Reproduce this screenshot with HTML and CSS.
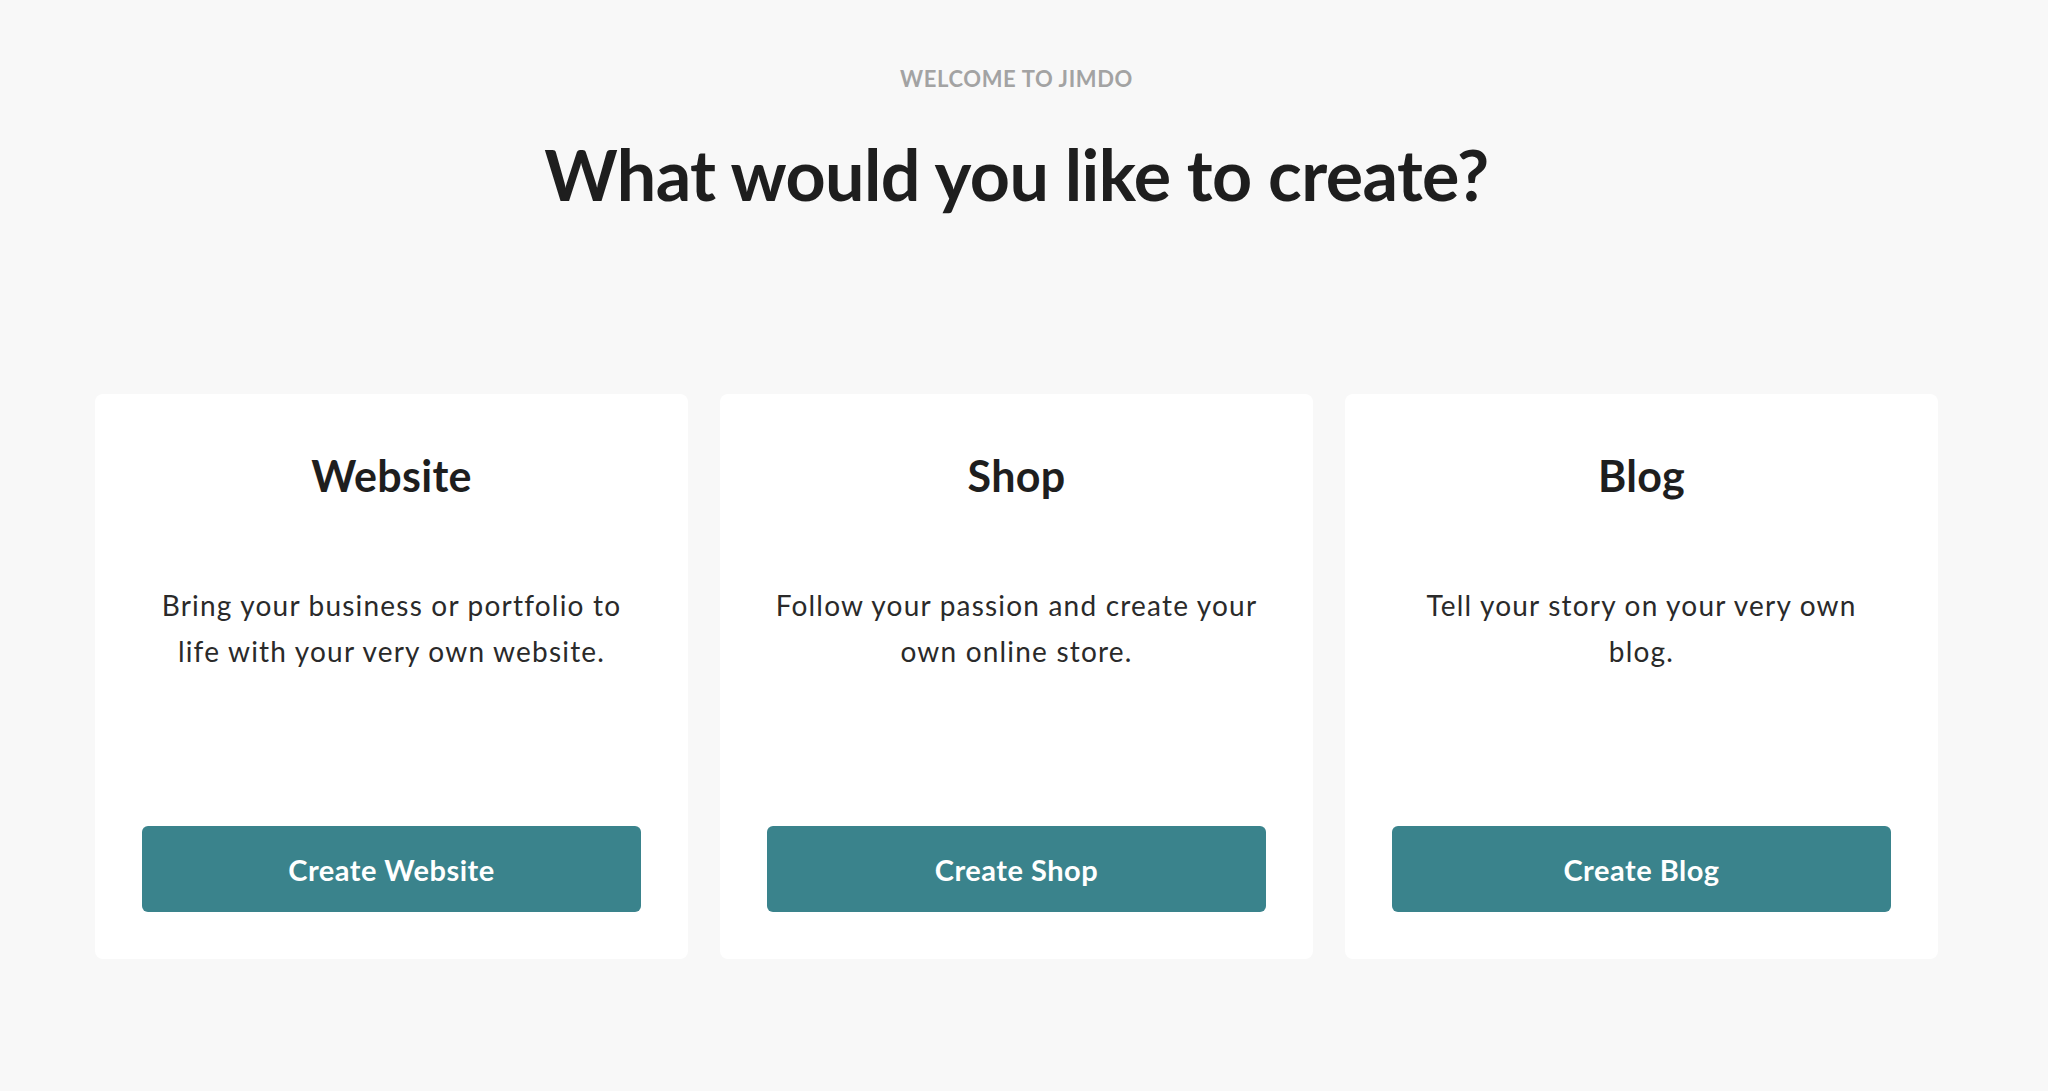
FILE: index.html
```html
<!DOCTYPE html>
<html lang="en">
<head>
<meta charset="utf-8">
<title>Welcome to Jimdo</title>
<link rel="stylesheet" href="styles.css">
</head>
<body>
<main class="page">
  <header class="intro">
    <p class="eyebrow">WELCOME TO JIMDO</p>
    <h1 class="headline">What would you like to create?</h1>
  </header>
  <section class="cards">
    <article class="card">
      <h2 class="card-title">Website</h2>
      <p class="card-text">Bring your business or portfolio to life with your very own website.</p>
      <button class="card-btn" type="button">Create Website</button>
    </article>
    <article class="card">
      <h2 class="card-title">Shop</h2>
      <p class="card-text">Follow your passion and create your own online store.</p>
      <button class="card-btn" type="button">Create Shop</button>
    </article>
    <article class="card">
      <h2 class="card-title">Blog</h2>
      <p class="card-text">Tell your story on your very own blog.</p>
      <button class="card-btn" type="button">Create Blog</button>
    </article>
  </section>
</main>
</body>
</html>
```

FILE: styles.css
```css
* { box-sizing: border-box; }
html, body {
  margin: 0;
  padding: 0;
  background: #f8f8f8;
}
body {
  font-family: "Lato", "Liberation Sans", sans-serif;
  color: #1f1f1f;
  min-height: 1091px;
}
.page {
  width: 2033px;
  display: flex;
  flex-direction: column;
  align-items: center;
}
.intro {
  display: flex;
  flex-direction: column;
  align-items: center;
  padding-top: 66px;
}
.eyebrow {
  margin: 0;
  font-size: 22px;
  line-height: 26px;
  font-weight: 700;
  letter-spacing: 0.6px;
  color: #a3a3a3;
}
.headline {
  margin: 40px 0 0;
  font-size: 70px;
  line-height: 84px;
  font-weight: 700;
  letter-spacing: -0.6px;
  color: #1e1e1e;
}
.cards {
  margin-top: 178px;
  width: 1843px;
  display: grid;
  grid-template-columns: repeat(3, 1fr);
  gap: 32px;
}
.card {
  background: #ffffff;
  border-radius: 8px;
  height: 565px;
  padding: 47px;
  display: flex;
  flex-direction: column;
  align-items: stretch;
  text-align: center;
}
.card-title {
  margin: 9px 0 0;
  font-size: 43px;
  line-height: 52px;
  font-weight: 700;
  letter-spacing: 0.3px;
  color: #1e1e1e;
}
.card-text {
  margin: 80px 0 0;
  font-size: 28px;
  line-height: 46px;
  font-weight: 400;
  letter-spacing: 1.2px;
  color: #2a2a2a;
}
.card-btn {
  margin-top: auto;
  height: 86px;
  border: 0;
  border-radius: 6px;
  background: #3a838c;
  color: #ffffff;
  font-family: inherit;
  font-size: 29px;
  font-weight: 700;
  letter-spacing: 0.5px;
  cursor: pointer;
}
```
